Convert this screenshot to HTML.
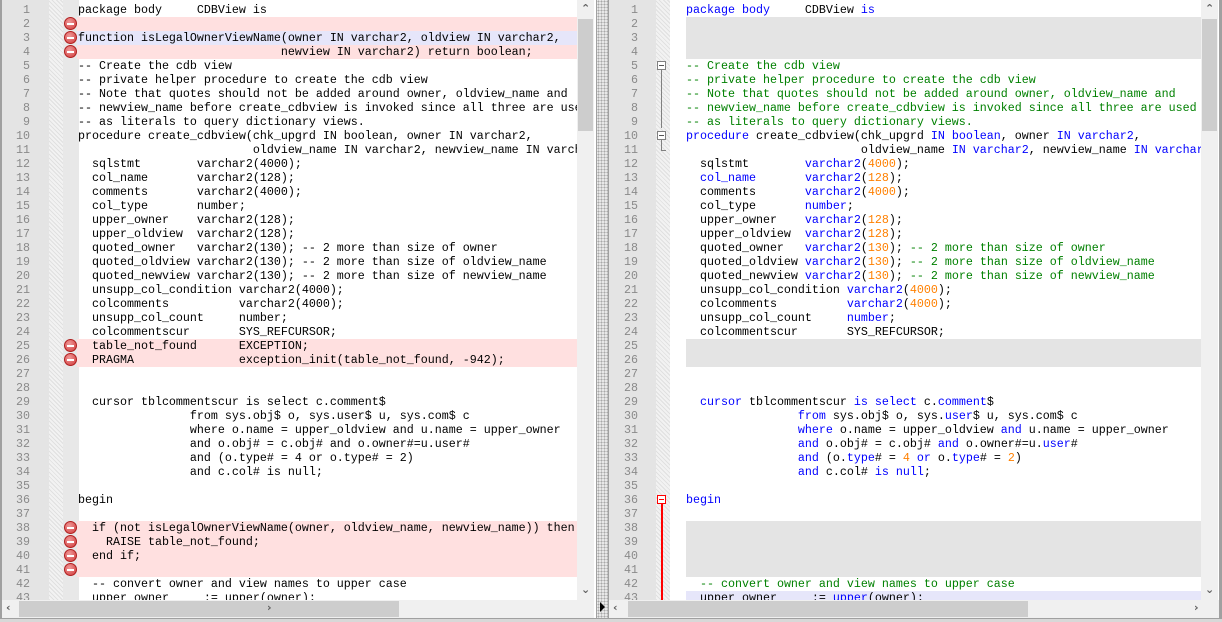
<!DOCTYPE html>
<html><head><meta charset="utf-8"><style>
*{margin:0;padding:0;box-sizing:border-box}
body{width:1222px;height:622px;overflow:hidden;background:#f0f0f0;position:relative;font-family:"Liberation Mono",monospace;font-size:11.67px}
.pane{position:absolute;top:0;height:618px;background:#fff;overflow:hidden}
.gut{position:absolute;top:0;left:0;width:47px;height:600px;background:#e4e4e4}
.hatch{position:absolute;top:0;left:47px;width:14px;height:600px;background:#f2f2f2;background-image:repeating-linear-gradient(45deg,#e0e0e0 0 1px,transparent 1px 3px)}
.mar{position:absolute;top:0;left:61px;width:16px;height:600px;background:#e8e8e8}
.ln{position:absolute;left:0;width:30px;text-align:right;color:#8a8a8a;height:14px;line-height:14px}
.row{position:absolute;height:14px}
.code{position:absolute;white-space:pre;line-height:14px;height:14px;color:#000}
.k{color:#0000ff}.n{color:#ff8000}.c{color:#008000}
.del{position:absolute;left:62px;width:13px;height:13px;border-radius:50%;background:radial-gradient(circle at 40% 35%,#f09a9a,#d03838);border:1px solid #b02020}
.del::after{content:"";position:absolute;left:2px;top:5px;width:7px;height:2px;background:#fff}
.vs{position:absolute;top:0;width:17px;height:600px;background:#f0f0f0}
.vs .th{position:absolute;left:1px;top:19px;width:15px;height:112px;background:#cdcdcd}
.hs{position:absolute;left:0;top:600px;height:18px;background:#f0f0f0}
.hs .th{position:absolute;top:1px;height:16px;background:#cdcdcd}
.arr{position:absolute;color:#606060;font-family:"DejaVu Sans",sans-serif;font-size:11px;font-weight:bold}
</style></head><body>

<div class="pane" style="left:0;width:597px;border-left:2px solid #a0a0a0;border-right:1px solid #a0a0a0">
<div class="gut"></div><div class="hatch"></div><div class="mar"></div>
<div class="row" style="left:75px;width:500px;top:17px;background:#ffe0e0"></div>
<div class="row" style="left:75px;width:500px;top:31px;background:#e6e6fa"></div>
<div class="row" style="left:75px;width:500px;top:45px;background:#ffe0e0"></div>
<div class="row" style="left:75px;width:500px;top:339px;height:28px;background:#ffe0e0"></div>
<div class="row" style="left:75px;width:500px;top:521px;height:56px;background:#ffe0e0"></div>
<div class="del" style="top:17px"></div><div class="del" style="top:31px"></div><div class="del" style="top:45px"></div>
<div class="del" style="top:339px"></div><div class="del" style="top:353px"></div>
<div class="del" style="top:521px"></div><div class="del" style="top:535px"></div><div class="del" style="top:549px"></div><div class="del" style="top:563px"></div>
<div style="position:absolute;left:76px;top:0;width:500px;height:600px;overflow:hidden">
<div class="code" style="top:3px">package body     CDBView is</div>
<div class="code" style="top:31px">function isLegalOwnerViewName(owner IN varchar2, oldview IN varchar2,</div>
<div class="code" style="top:45px">                             newview IN varchar2) return boolean;</div>
<div class="code" style="top:59px">-- Create the cdb view</div>
<div class="code" style="top:73px">-- private helper procedure to create the cdb view</div>
<div class="code" style="top:87px">-- Note that quotes should not be added around owner, oldview_name and</div>
<div class="code" style="top:101px">-- newview_name before create_cdbview is invoked since all three are used</div>
<div class="code" style="top:115px">-- as literals to query dictionary views.</div>
<div class="code" style="top:129px">procedure create_cdbview(chk_upgrd IN boolean, owner IN varchar2,</div>
<div class="code" style="top:143px">                         oldview_name IN varchar2, newview_name IN varchar2</div>
<div class="code" style="top:157px">  sqlstmt        varchar2(4000);</div>
<div class="code" style="top:171px">  col_name       varchar2(128);</div>
<div class="code" style="top:185px">  comments       varchar2(4000);</div>
<div class="code" style="top:199px">  col_type       number;</div>
<div class="code" style="top:213px">  upper_owner    varchar2(128);</div>
<div class="code" style="top:227px">  upper_oldview  varchar2(128);</div>
<div class="code" style="top:241px">  quoted_owner   varchar2(130); -- 2 more than size of owner</div>
<div class="code" style="top:255px">  quoted_oldview varchar2(130); -- 2 more than size of oldview_name</div>
<div class="code" style="top:269px">  quoted_newview varchar2(130); -- 2 more than size of newview_name</div>
<div class="code" style="top:283px">  unsupp_col_condition varchar2(4000);</div>
<div class="code" style="top:297px">  colcomments          varchar2(4000);</div>
<div class="code" style="top:311px">  unsupp_col_count     number;</div>
<div class="code" style="top:325px">  colcommentscur       SYS_REFCURSOR;</div>
<div class="code" style="top:339px">  table_not_found      EXCEPTION;</div>
<div class="code" style="top:353px">  PRAGMA               exception_init(table_not_found, -942);</div>
<div class="code" style="top:395px">  cursor tblcommentscur is select c.comment$</div>
<div class="code" style="top:409px">                from sys.obj$ o, sys.user$ u, sys.com$ c</div>
<div class="code" style="top:423px">                where o.name = upper_oldview and u.name = upper_owner</div>
<div class="code" style="top:437px">                and o.obj# = c.obj# and o.owner#=u.user#</div>
<div class="code" style="top:451px">                and (o.type# = 4 or o.type# = 2)</div>
<div class="code" style="top:465px">                and c.col# is null;</div>
<div class="code" style="top:493px">begin</div>
<div class="code" style="top:521px">  if (not isLegalOwnerViewName(owner, oldview_name, newview_name)) then</div>
<div class="code" style="top:535px">    RAISE table_not_found;</div>
<div class="code" style="top:549px">  end if;</div>
<div class="code" style="top:577px">  -- convert owner and view names to upper case</div>
<div class="code" style="top:591px">  upper_owner     := upper(owner);</div>
</div>
<div class="vs" style="left:575px"><div class="th"></div><span class="arr" style="left:4px;top:2px">&#8963;</span><span class="arr" style="left:4px;top:583px">&#8964;</span></div>
<div class="hs" style="width:592px"><div class="th" style="left:17px;width:380px"></div><span class="arr" style="left:4px;top:1px">&lsaquo;</span><span class="arr" style="left:265px;top:1px">&rsaquo;</span></div>
</div>

<div style="position:absolute;left:597px;top:0;width:11px;height:618px;background:#e8e8e8;background-image:radial-gradient(#a8a8a8 0.8px,transparent 1px);background-size:3px 3px"></div>

<div class="pane" style="left:608px;width:614px;border-left:1px solid #a0a0a0;border-right:3px solid #a0a0a0">
<div class="gut"></div><div class="hatch"></div><div class="mar" style="background:#fff"></div>
<div class="row" style="left:77px;width:515px;top:17px;height:42px;background:#e4e4e4"></div>
<div class="row" style="left:77px;width:515px;top:339px;height:28px;background:#e4e4e4"></div>
<div class="row" style="left:77px;width:515px;top:521px;height:56px;background:#e4e4e4"></div>
<div class="row" style="left:77px;width:515px;top:591px;background:#e6e6fa"></div>
<div style="position:absolute;left:48px;top:61px;width:9px;height:9px;border:1px solid #808080;background:#fff"><div style="position:absolute;left:1px;top:3px;width:5px;height:1px;background:#555"></div></div>
<div style="position:absolute;left:52px;top:70px;width:1px;height:58px;background:#808080"></div>
<div style="position:absolute;left:48px;top:131px;width:9px;height:9px;border:1px solid #808080;background:#fff"><div style="position:absolute;left:1px;top:3px;width:5px;height:1px;background:#555"></div></div>
<div style="position:absolute;left:52px;top:140px;width:1px;height:10px;background:#808080"></div>
<div style="position:absolute;left:52px;top:150px;width:5px;height:1px;background:#808080"></div>
<div style="position:absolute;left:52px;top:504px;width:2px;height:96px;background:#ff0000;z-index:5"></div>
<div style="position:absolute;left:48px;top:495px;width:9px;height:9px;border:1px solid #ff0000;background:#fff;z-index:6"><div style="position:absolute;left:1px;top:3px;width:5px;height:1px;background:#ff0000"></div></div>
<div style="position:absolute;left:77px;top:0;width:515px;height:600px;overflow:hidden">
<div class="code" style="top:3px"><span class="k">package body</span>     CDBView <span class="k">is</span></div>
<div class="code c" style="top:59px">-- Create the cdb view</div>
<div class="code c" style="top:73px">-- private helper procedure to create the cdb view</div>
<div class="code c" style="top:87px">-- Note that quotes should not be added around owner, oldview_name and</div>
<div class="code c" style="top:101px">-- newview_name before create_cdbview is invoked since all three are used</div>
<div class="code c" style="top:115px">-- as literals to query dictionary views.</div>
<div class="code" style="top:129px"><span class="k">procedure</span> create_cdbview(chk_upgrd <span class="k">IN boolean</span>, owner <span class="k">IN varchar2</span>,</div>
<div class="code" style="top:143px">                         oldview_name <span class="k">IN varchar2</span>, newview_name <span class="k">IN varchar2</span></div>
<div class="code" style="top:157px">  sqlstmt        <span class="k">varchar2</span>(<span class="n">4000</span>);</div>
<div class="code" style="top:171px">  <span class="k">col_name</span>       <span class="k">varchar2</span>(<span class="n">128</span>);</div>
<div class="code" style="top:185px">  comments       <span class="k">varchar2</span>(<span class="n">4000</span>);</div>
<div class="code" style="top:199px">  col_type       <span class="k">number</span>;</div>
<div class="code" style="top:213px">  upper_owner    <span class="k">varchar2</span>(<span class="n">128</span>);</div>
<div class="code" style="top:227px">  upper_oldview  <span class="k">varchar2</span>(<span class="n">128</span>);</div>
<div class="code" style="top:241px">  quoted_owner   <span class="k">varchar2</span>(<span class="n">130</span>); <span class="c">-- 2 more than size of owner</span></div>
<div class="code" style="top:255px">  quoted_oldview <span class="k">varchar2</span>(<span class="n">130</span>); <span class="c">-- 2 more than size of oldview_name</span></div>
<div class="code" style="top:269px">  quoted_newview <span class="k">varchar2</span>(<span class="n">130</span>); <span class="c">-- 2 more than size of newview_name</span></div>
<div class="code" style="top:283px">  unsupp_col_condition <span class="k">varchar2</span>(<span class="n">4000</span>);</div>
<div class="code" style="top:297px">  colcomments          <span class="k">varchar2</span>(<span class="n">4000</span>);</div>
<div class="code" style="top:311px">  unsupp_col_count     <span class="k">number</span>;</div>
<div class="code" style="top:325px">  colcommentscur       SYS_REFCURSOR;</div>
<div class="code" style="top:395px">  <span class="k">cursor</span> tblcommentscur <span class="k">is select</span> c.<span class="k">comment</span>$</div>
<div class="code" style="top:409px">                <span class="k">from</span> sys.obj$ o, sys.<span class="k">user</span>$ u, sys.com$ c</div>
<div class="code" style="top:423px">                <span class="k">where</span> o.name = upper_oldview <span class="k">and</span> u.name = upper_owner</div>
<div class="code" style="top:437px">                <span class="k">and</span> o.obj# = c.obj# <span class="k">and</span> o.owner#=u.<span class="k">user</span>#</div>
<div class="code" style="top:451px">                <span class="k">and</span> (o.<span class="k">type</span># = <span class="n">4</span> <span class="k">or</span> o.<span class="k">type</span># = <span class="n">2</span>)</div>
<div class="code" style="top:465px">                <span class="k">and</span> c.col# <span class="k">is null</span>;</div>
<div class="code k" style="top:493px">begin</div>
<div class="code" style="top:577px">  <span class="c">-- convert owner and view names to upper case</span></div>
<div class="code" style="top:591px">  upper_owner     := <span class="k">upper</span>(owner);</div>
</div>
<div class="vs" style="left:592px"><div class="th"></div><span class="arr" style="left:4px;top:2px">&#8963;</span><span class="arr" style="left:4px;top:583px">&#8964;</span></div>
<div class="hs" style="width:610px"><div class="th" style="left:19px;width:400px"></div><span class="arr" style="left:4px;top:1px">&lsaquo;</span><span class="arr" style="left:585px;top:1px">&rsaquo;</span></div>
</div>

<div style="position:absolute;left:0;top:618px;width:1222px;height:4px;background:#d8d8d8;border-top:1px solid #a0a0a0"></div>

<div style="position:absolute;left:0;top:0;width:0;height:0">
<div class="ln" style="top:3px">1</div><div class="ln" style="top:17px">2</div><div class="ln" style="top:31px">3</div><div class="ln" style="top:45px">4</div><div class="ln" style="top:59px">5</div><div class="ln" style="top:73px">6</div><div class="ln" style="top:87px">7</div><div class="ln" style="top:101px">8</div><div class="ln" style="top:115px">9</div><div class="ln" style="top:129px">10</div><div class="ln" style="top:143px">11</div><div class="ln" style="top:157px">12</div><div class="ln" style="top:171px">13</div><div class="ln" style="top:185px">14</div><div class="ln" style="top:199px">15</div><div class="ln" style="top:213px">16</div><div class="ln" style="top:227px">17</div><div class="ln" style="top:241px">18</div><div class="ln" style="top:255px">19</div><div class="ln" style="top:269px">20</div><div class="ln" style="top:283px">21</div><div class="ln" style="top:297px">22</div><div class="ln" style="top:311px">23</div><div class="ln" style="top:325px">24</div><div class="ln" style="top:339px">25</div><div class="ln" style="top:353px">26</div><div class="ln" style="top:367px">27</div><div class="ln" style="top:381px">28</div><div class="ln" style="top:395px">29</div><div class="ln" style="top:409px">30</div><div class="ln" style="top:423px">31</div><div class="ln" style="top:437px">32</div><div class="ln" style="top:451px">33</div><div class="ln" style="top:465px">34</div><div class="ln" style="top:479px">35</div><div class="ln" style="top:493px">36</div><div class="ln" style="top:507px">37</div><div class="ln" style="top:521px">38</div><div class="ln" style="top:535px">39</div><div class="ln" style="top:549px">40</div><div class="ln" style="top:563px">41</div><div class="ln" style="top:577px">42</div><div class="ln" style="top:591px;height:9px;overflow:hidden">43</div>
</div>
<div style="position:absolute;left:608px;top:0;width:0;height:0">
<div class="ln" style="top:3px">1</div><div class="ln" style="top:17px">2</div><div class="ln" style="top:31px">3</div><div class="ln" style="top:45px">4</div><div class="ln" style="top:59px">5</div><div class="ln" style="top:73px">6</div><div class="ln" style="top:87px">7</div><div class="ln" style="top:101px">8</div><div class="ln" style="top:115px">9</div><div class="ln" style="top:129px">10</div><div class="ln" style="top:143px">11</div><div class="ln" style="top:157px">12</div><div class="ln" style="top:171px">13</div><div class="ln" style="top:185px">14</div><div class="ln" style="top:199px">15</div><div class="ln" style="top:213px">16</div><div class="ln" style="top:227px">17</div><div class="ln" style="top:241px">18</div><div class="ln" style="top:255px">19</div><div class="ln" style="top:269px">20</div><div class="ln" style="top:283px">21</div><div class="ln" style="top:297px">22</div><div class="ln" style="top:311px">23</div><div class="ln" style="top:325px">24</div><div class="ln" style="top:339px">25</div><div class="ln" style="top:353px">26</div><div class="ln" style="top:367px">27</div><div class="ln" style="top:381px">28</div><div class="ln" style="top:395px">29</div><div class="ln" style="top:409px">30</div><div class="ln" style="top:423px">31</div><div class="ln" style="top:437px">32</div><div class="ln" style="top:451px">33</div><div class="ln" style="top:465px">34</div><div class="ln" style="top:479px">35</div><div class="ln" style="top:493px">36</div><div class="ln" style="top:507px">37</div><div class="ln" style="top:521px">38</div><div class="ln" style="top:535px">39</div><div class="ln" style="top:549px">40</div><div class="ln" style="top:563px">41</div><div class="ln" style="top:577px">42</div><div class="ln" style="top:591px;height:9px;overflow:hidden">43</div>
</div>
<div style="position:absolute;left:600px;top:602px;width:0;height:0;border-left:5px solid #000;border-top:5px solid transparent;border-bottom:5px solid transparent"></div>
</body></html>
